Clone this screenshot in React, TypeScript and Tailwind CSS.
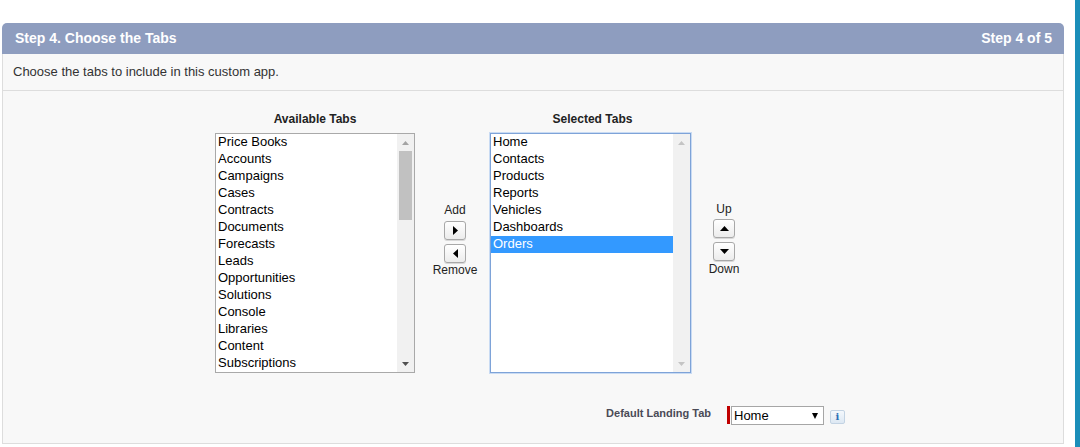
import React from 'react';

const available = [
  'Price Books',
  'Accounts',
  'Campaigns',
  'Cases',
  'Contracts',
  'Documents',
  'Forecasts',
  'Leads',
  'Opportunities',
  'Solutions',
  'Console',
  'Libraries',
  'Content',
  'Subscriptions',
];

const selected = ['Home', 'Contacts', 'Products', 'Reports', 'Vehicles', 'Dashboards', 'Orders'];

const Tri = ({ dir, color = '#000', w = 8, h = 8 }: { dir: 'up' | 'down' | 'left' | 'right'; color?: string; w?: number; h?: number }) => {
  const pts = {
    up: `0,${h} ${w / 2},0 ${w},${h}`,
    down: `0,0 ${w},0 ${w / 2},${h}`,
    left: `${w},0 ${w},${h} 0,${h / 2}`,
    right: `0,0 ${w},${h / 2} 0,${h}`,
  }[dir];
  return (
    <svg width={w} height={h} viewBox={`0 0 ${w} ${h}`}>
      <polygon points={pts} fill={color} />
    </svg>
  );
};

const ArrowButton = ({ dir }: { dir: 'up' | 'down' | 'left' | 'right' }) => {
  const horiz = dir === 'left' || dir === 'right';
  return (
    <div className="w-[22px] h-[19px] rounded-[3px] border border-[#a8a8a8] bg-gradient-to-b from-white to-[#ececec] flex items-center justify-center shadow-[0_1px_0_#d8d8d8]">
      {horiz ? <Tri dir={dir} w={5} h={9} /> : <Tri dir={dir} w={9} h={5} />}
    </div>
  );
};

const ListBox = ({
  items,
  highlight,
  focused,
  thumb,
}: {
  items: string[];
  highlight?: string;
  focused?: boolean;
  thumb?: boolean;
}) => (
  <div
    className={
      focused
        ? 'w-[201px] h-[240px] bg-white border border-[#7ea3d8] shadow-[0_0_0_1px_#c9dbf3] flex'
        : 'w-[200px] h-[240px] bg-white border border-[#a9a9a9] flex'
    }
  >
    <div className="flex-1 overflow-hidden">
      {items.map((it) => (
        <div
          key={it}
          className={
            it === highlight
              ? 'h-[17px] leading-[15px] pl-[2px] text-[13px] bg-[#3399ff] text-white'
              : 'h-[17px] leading-[15px] pl-[2px] text-[13px] text-black'
          }
        >
          {it}
        </div>
      ))}
    </div>
    <div className="w-[17px] h-full bg-[#f1f1f1] flex flex-col items-center">
      <div className="h-[17px] flex items-center justify-center">
        <Tri dir="up" color={thumb ? '#a3a3a3' : '#c4c4c4'} w={7} h={4} />
      </div>
      <div className="flex-1 w-full px-[2px]">
        {thumb && <div className="w-full h-[69px] bg-[#c1c1c1]" />}
      </div>
      <div className="h-[17px] flex items-center justify-center">
        <Tri dir="down" color={thumb ? '#505050' : '#c4c4c4'} w={7} h={4} />
      </div>
    </div>
  </div>
);

export default function App() {
  return (
    <div className="w-[1080px] h-[447px] bg-white flex overflow-hidden font-['Liberation_Sans',Arial,sans-serif]">
      <div className="pl-[2px] pt-[23px]">
        <div className="w-[1062px]">
          <div className="h-[31px] rounded-t-[5px] bg-[#8e9dbf] flex items-center justify-between pl-[13px] pr-[12px] text-white font-bold text-[14px]">
            <span>Step 4. Choose the Tabs</span>
            <span>Step 4 of 5</span>
          </div>
          <div className="h-[37px] bg-[#f8f8f8] border-x border-b border-[#dddddd] flex items-center pl-[10px] text-[13px] text-[#333]">
            Choose the tabs to include in this custom app.
          </div>
          <div className="h-[353px] bg-[#f8f8f8] border-x border-b border-[#dddddd] pt-[21px]">
            <div className="flex items-start ml-[212px]">
              <div className="flex flex-col items-center">
                <div className="h-[14px] leading-[14px] mb-[7px] text-[12px] font-bold text-[#222]">Available Tabs</div>
                <ListBox items={available} thumb />
              </div>
              <div className="w-[44px] ml-[18px] mr-[13px] mt-[91px] flex flex-col items-center text-[12px] text-[#222]">
                <div className="leading-[14px]">Add</div>
                <div className="mt-[4px]">
                  <ArrowButton dir="right" />
                </div>
                <div className="mt-[4px]">
                  <ArrowButton dir="left" />
                </div>
                <div className="leading-[14px]">Remove</div>
              </div>
              <div className="flex flex-col items-center">
                <div className="h-[14px] leading-[14px] mb-[7px] text-[12px] font-bold text-[#222] pl-[4px]">Selected Tabs</div>
                <ListBox items={selected} highlight="Orders" focused />
              </div>
              <div className="w-[44px] ml-[11px] mt-[90px] flex flex-col items-center text-[12px] text-[#222]">
                <div className="leading-[14px]">Up</div>
                <div className="mt-[3px]">
                  <ArrowButton dir="up" />
                </div>
                <div className="mt-[4px]">
                  <ArrowButton dir="down" />
                </div>
                <div className="leading-[14px] mt-[1px]">Down</div>
              </div>
            </div>
            <div className="flex items-start mt-[33px]">
              <div className="w-[708px] text-right leading-[14px] text-[11px] font-bold text-[#4a4a56]">Default Landing Tab</div>
              <div className="ml-[16px] w-[3px] h-[18px] bg-[#c00000]" />
              <div className="ml-[1px] w-[93px] h-[19px] bg-white border border-[#a6a6a6] flex items-center justify-between pl-[2px] pr-[5px] text-[13px] text-black">
                <span>Home</span>
                <Tri dir="down" w={6} h={6} />
              </div>
              <div className="ml-[6px] mt-[4px] w-[15px] h-[14px] rounded-[2px] border border-[#c3d3e3] bg-gradient-to-b from-[#f4f8fc] to-[#dde8f3] flex items-center justify-center text-[10px] font-bold text-[#2a6db5] font-['DejaVu_Serif',serif] leading-none">
                i
              </div>
            </div>
          </div>
        </div>
      </div>
      <div className="flex-1" />
      <div className="w-[5px] h-full bg-[#1b8eb9]" />
    </div>
  );
}
